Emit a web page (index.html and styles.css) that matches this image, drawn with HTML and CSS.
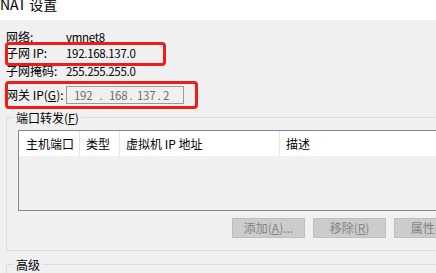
FILE: index.html
```html
<!DOCTYPE html>
<html lang="zh-CN">
<head>
<meta charset="utf-8">
<title>NAT 设置</title>
<link rel="stylesheet" href="styles.css">
</head>
<body>
<div class="page">
  <div class="titlebar"><div class="title">NAT 设置</div></div>
  <div class="content">
    <div class="form">
      <div class="row r1"><div class="lbl">网络:</div><div class="val">vmnet8</div></div>
      <div class="row r2"><div class="lbl">子网 IP:</div><div class="val">192.168.137.0</div></div>
      <div class="row r3"><div class="lbl">子网掩码:</div><div class="val">255.255.255.0</div></div>
      <div class="row r4"><div class="lbl">网关 IP(<u>G</u>):</div>
        <div class="ipbox"><span class="oct o1">192</span><span class="dot">.</span><span class="oct o2">168</span><span class="dot">.</span><span class="oct o3">137</span><span class="dot">.</span><span class="oct o4">2</span></div>
      </div>
    </div>

    <div class="group g1">
      <div class="glabel">端口转发(<u>F</u>)</div>
      <div class="list">
        <div class="lhead">
          <div class="col c1">主机端口</div>
          <div class="col c2">类型</div>
          <div class="col c3">虚拟机 IP 地址</div>
          <div class="col c4">描述</div>
        </div>
      </div>
      <div class="buttons">
        <div class="btn">添加(<u>A</u>)...</div>
        <div class="btn">移除(<u>R</u>)</div>
        <div class="btn">属性(<u>P</u>)</div>
      </div>
    </div>

    <div class="group g2">
      <div class="glabel">高级</div>
    </div>
  </div>
  <div class="mark m1"></div>
  <div class="mark m2"></div>
</div>
</body>
</html>
```
FILE: styles.css
```css
html, body {
  margin: 0;
  padding: 0;
}
body {
  width: 436px;
  height: 273px;
  overflow: hidden;
  background: #f0f0f0;
  font-family: "Noto Sans CJK SC", "Noto Sans", sans-serif;
  font-size: 12px;
  color: #000;
}
.page {
  position: relative;
  width: 436px;
  height: 273px;
  overflow: hidden;
}
.titlebar {
  height: 20px;
  background: #fff;
  overflow: hidden;
}
.title {
  font-size: 14px;
  line-height: 14px;
  margin-top: -3px;
  color: #000;
  white-space: nowrap;
}
.content {
  width: 520px;
}
.form {
  display: flex;
  flex-direction: column;
  padding: 9px 0 0 6px;
}
.row {
  display: flex;
  align-items: center;
  height: 16px;
  line-height: 16px;
  white-space: nowrap;
}
.r3 { margin-top: 2px; }
.r4 { margin-top: 7px; height: 18px; }
.lbl { width: 60px; flex: none; }
.val {
  font-size: 11.5px;
  letter-spacing: -0.3px;
}
.ipbox {
  box-sizing: border-box;
  width: 118px;
  height: 18px;
  border: 1px solid #9a9a9a;
  background: #f0f0f0;
  color: #6d6d6d;
  display: flex;
  align-items: center;
  line-height: 16px;
  padding-left: 7px;
  font-size: 11.5px;
  letter-spacing: -0.3px;
}
.oct { flex: none; }
.o1 { width: 24px; }
.o2 { width: 19px; margin-left: 5px; }
.o3 { width: 19px; margin-left: 3px; }
.o4 { margin-left: 1px; }
.dot { width: 6px; text-align: center; flex: none; }
.group {
  border: 1px solid #dcdcdc;
  margin-left: 6px;
  padding-left: 11px;
}
.g1 {
  margin-top: 13px;
  height: 132px;
}
.g2 {
  margin-top: 13px;
  height: 40px;
}
.glabel {
  width: max-content;
  margin: -7px 0 0 -4px;
  padding: 0 2px;
  background: #f0f0f0;
  line-height: 14px;
  height: 14px;
  white-space: nowrap;
}
.list {
  margin-top: 5px;
  height: 81px;
  box-sizing: border-box;
  border: 1px solid #828790;
  border-right: none;
  background: #f0f0f0;
}
.lhead {
  display: flex;
  height: 25px;
  background: #fff;
}
.col {
  box-sizing: border-box;
  line-height: 25px;
  padding-left: 7px;
  border-right: 1px solid #e5e5e5;
  white-space: nowrap;
}
.c1 { width: 61px; }
.c2 { width: 40px; padding-left: 6px; }
.c3 { width: 160px; padding-left: 6px; }
.c4 { flex: 1; border-right: none; padding-left: 6px; }
.buttons {
  display: flex;
  gap: 8px;
  margin: 7px 0 0 214px;
}
.btn {
  box-sizing: border-box;
  width: 73px;
  height: 20px;
  border: 1px solid #bfbfbf;
  background: #cccccc;
  color: #838383;
  text-align: center;
  line-height: 18px;
  white-space: nowrap;
}
.mark {
  position: absolute;
  box-sizing: border-box;
  border: 3px solid #ef1c1c;
  border-radius: 4px;
}
.m1 { left: 5px; top: 42px; width: 161px; height: 24px; }
.m2 { left: 5px; top: 81px; width: 193px; height: 28px; }
```
